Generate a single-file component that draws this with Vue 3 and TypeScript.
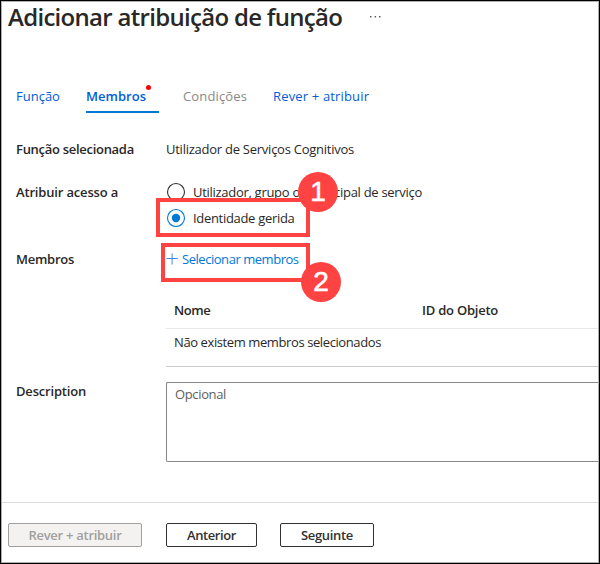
<script setup lang="ts">
import { ref } from 'vue'

type Access = 'user' | 'managed'

const access = ref<Access>('managed')
const description = ref('')
</script>

<template>
  <main class="frame">
    <header class="title-bar">
      <h1>Adicionar atribuição de função</h1>
      <svg class="more" width="13" height="4" viewBox="0 0 13 4" aria-hidden="true">
        <rect x="1" y="1" width="1.5" height="1.5" />
        <rect x="5.6" y="1" width="1.5" height="1.5" />
        <rect x="10" y="1" width="1.5" height="1.5" />
      </svg>
    </header>

    <nav class="tabs">
      <a class="tab tab-role">Função</a>
      <a class="tab tab-members">Membros<i class="dot"></i></a>
      <a class="tab tab-conditions">Condições</a>
      <a class="tab tab-review">Rever + atribuir</a>
    </nav>

    <section class="form">
      <div class="row row-role">
        <div class="label l-role">Função selecionada</div>
        <div class="value v-role">Utilizador de Serviços Cognitivos</div>
      </div>

      <div class="row row-access">
        <div class="label l-access">Atribuir acesso a</div>
        <div class="options">
          <div class="option" @click="access = 'user'">
            <svg class="radio" :class="{ on: access === 'user' }" width="20" height="20" viewBox="0 0 20 20">
              <circle class="ring" cx="10" cy="10" r="8.5" />
              <circle class="core" cx="10" cy="10" r="4.2" />
            </svg>
            <span class="o-user">Utilizador, grupo ou principal de serviço</span>
            <b class="badge badge-one">1</b>
          </div>
          <div class="option" @click="access = 'managed'">
            <svg class="radio" :class="{ on: access === 'managed' }" width="20" height="20" viewBox="0 0 20 20">
              <circle class="ring" cx="10" cy="10" r="8.5" />
              <circle class="core" cx="10" cy="10" r="4.2" />
            </svg>
            <span class="o-managed">Identidade gerida</span>
            <i class="mark mark-one"></i>
          </div>
        </div>
      </div>

      <div class="row row-members">
        <div class="label l-members">Membros</div>
        <a class="select">
          <svg class="plus" width="12" height="12" viewBox="0 0 12 12" aria-hidden="true">
            <path d="M6.1 0.4V11.6M0.5 5.5H11.8" />
          </svg>
          <span>Selecionar membros</span>
          <i class="mark mark-two"></i>
          <b class="badge badge-two">2</b>
        </a>
      </div>

      <div class="table">
        <div class="thead">
          <span class="th-name">Nome</span>
          <span class="th-id">ID do Objeto</span>
        </div>
        <div class="empty">Não existem membros selecionados</div>
      </div>

      <div class="row row-desc">
        <div class="label l-desc">Description</div>
        <textarea v-model="description" class="area" placeholder="Opcional"></textarea>
      </div>
    </section>

    <footer class="footer">
      <button class="btn btn-review" disabled>Rever + atribuir</button>
      <button class="btn btn-prev">Anterior</button>
      <button class="btn btn-next">Seguinte</button>
    </footer>
  </main>
</template>

<style>
body {
  margin: 0;
  background: #fff;
}
</style>

<style scoped>
* {
  box-sizing: border-box;
}
.frame {
  width: 600px;
  height: 564px;
  display: flex;
  flex-direction: column;
  overflow: hidden;
  border: 1px solid #000;
  box-shadow: inset 0 0 0 1px #b0b0b0;
  background: #fff;
  color: #292827;
  font: 13px/20px 'Open Sans', sans-serif;
}
.title-bar {
  height: 84px;
  display: flex;
  align-items: flex-start;
  padding-left: 7px;
}
h1 {
  width: 361px;
  margin: 0;
  font-size: 24px;
  line-height: 32px;
  font-weight: 600;
  letter-spacing: -0.7px;
  white-space: nowrap;
}
.more {
  margin-top: 14px;
  fill: #605e5c;
}
.tabs {
  display: flex;
  height: 28px;
  padding-left: 15px;
  color: #015cda;
}
.tab {
  position: relative;
  padding-top: 1px;
  white-space: nowrap;
}
.tab-role {
  width: 70px;
}
.tab-members {
  width: 73px;
  border-bottom: 2px solid #0078d4;
  font-weight: 600;
  letter-spacing: 0.03px;
}
.tab-conditions {
  margin-left: 24px;
  width: 90px;
  color: #8a8886;
  letter-spacing: 0.14px;
}
.tab-review {
  letter-spacing: 0.16px;
}
.dot {
  position: absolute;
  left: 60px;
  top: 0;
  width: 5px;
  height: 5px;
  border-radius: 50%;
  background: #f00;
}
.form {
  display: flex;
  flex-direction: column;
  height: 389px;
  padding: 26px 1px 0 15px;
}
.row {
  display: flex;
}
.label {
  flex: 0 0 150px;
  font-weight: 600;
  white-space: nowrap;
}
.row-role {
  height: 43px;
}
.row-access {
  height: 67px;
}
.row-members {
  height: 51px;
}
.l-role {
  letter-spacing: -0.29px;
}
.v-role {
  letter-spacing: -0.25px;
}
.l-access {
  letter-spacing: -0.17px;
}
.l-members {
  letter-spacing: -0.26px;
}
.l-desc {
  letter-spacing: -0.19px;
}
.options {
  display: flex;
  flex-direction: column;
  gap: 6px;
}
.option {
  position: relative;
  display: flex;
  height: 20px;
  gap: 7px;
  white-space: nowrap;
}
.radio {
  flex: none;
}
.ring {
  fill: none;
  stroke: #323130;
  stroke-width: 1.1;
}
.core {
  fill: none;
}
.on .ring {
  stroke: #0078d4;
}
.on .core {
  fill: #0078d4;
}
.o-user {
  letter-spacing: -0.29px;
}
.o-managed {
  letter-spacing: -0.31px;
}
.select {
  position: relative;
  display: flex;
  height: 20px;
  gap: 4px;
  color: #0078d4;
  letter-spacing: -0.46px;
  white-space: nowrap;
}
.plus {
  margin-top: 4px;
  fill: none;
  stroke: #3f86e0;
  stroke-width: 1;
}
.mark {
  position: absolute;
  border: 4px solid #ff4242;
}
.mark-one {
  left: -10px;
  top: -10px;
  width: 154px;
  height: 39px;
}
.mark-two {
  left: -5px;
  top: -6px;
  width: 149px;
  height: 39px;
}
.badge {
  position: absolute;
  z-index: 2;
  width: 40px;
  height: 40px;
  border-radius: 50%;
  background: #ff4242;
  color: #fff;
  font: 28px/40px 'Liberation Sans', sans-serif;
  letter-spacing: 0;
  text-align: center;
  -webkit-text-stroke: 0.6px #fff;
}
.badge-one {
  left: 132px;
  top: -10px;
}
.badge-two {
  left: 135px;
  top: 13px;
}
.table {
  margin-left: 150px;
  height: 67px;
  border-bottom: 1px solid #c8c8c8;
}
.thead {
  display: flex;
  height: 29px;
  padding-left: 8px;
  border-bottom: 1px solid #e8e8e8;
  font-weight: 600;
}
.th-name {
  width: 248px;
  letter-spacing: -0.4px;
}
.th-id {
  letter-spacing: -0.23px;
}
.empty {
  padding: 3px 0 0 8px;
  letter-spacing: -0.4px;
}
.row-desc {
  margin-top: 14px;
}
.area {
  flex: 1;
  height: 80px;
  margin: 1px 0 0;
  padding: 1px 8px;
  border: 1px solid #8a8886;
  border-right: 0;
  border-radius: 2px 0 0 2px;
  outline: 0;
  resize: none;
  background: #fff;
  color: #292827;
  font: inherit;
  letter-spacing: -0.36px;
}
.area::placeholder {
  color: #605e5c;
  opacity: 1;
}
.footer {
  display: flex;
  align-items: flex-start;
  flex: 1;
  margin: 0 1px;
  padding: 20px 0 0 6px;
  border-top: 1px solid #dcdcdc;
}
.btn {
  height: 24px;
  padding: 0;
  border: 1px solid #323130;
  border-radius: 2px;
  background: #fff;
  color: #323130;
  font: 600 13px/20px 'Open Sans', sans-serif;
}
.btn-review {
  width: 134px;
  border-color: #a19f9d;
  background: #f3f2f1;
  color: #a19f9d;
  letter-spacing: -0.28px;
}
.btn-prev {
  width: 91px;
  margin-left: 24px;
  letter-spacing: -0.4px;
}
.btn-next {
  width: 94px;
  margin-left: 23px;
  letter-spacing: -0.33px;
}
</style>
